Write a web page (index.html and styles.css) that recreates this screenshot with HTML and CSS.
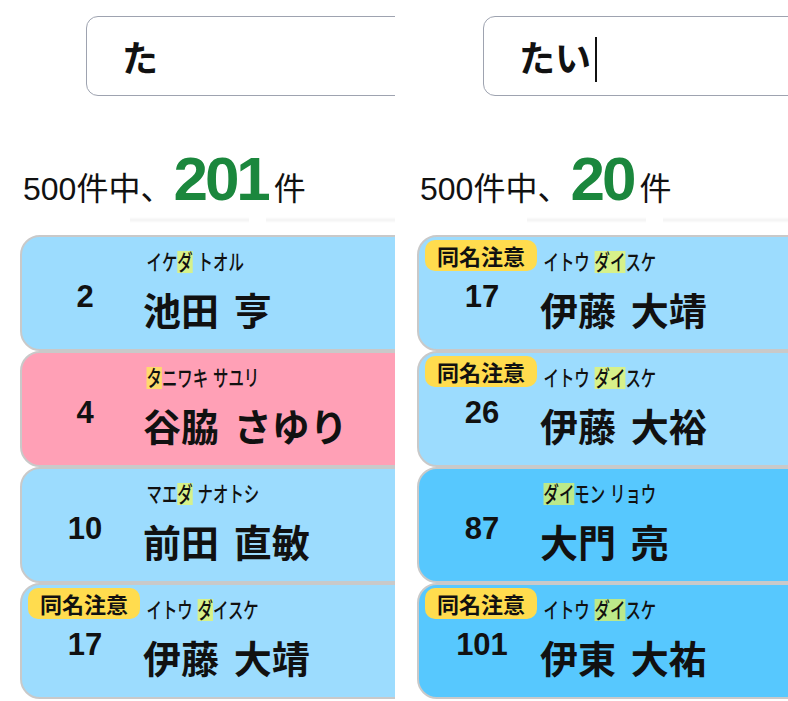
FILE: index.html
```html
<!DOCTYPE html>
<html lang="ja">
<head>
<meta charset="utf-8">
<title>検索</title>
<link rel="stylesheet" href="styles.css">
</head>
<body>
<div class="screens">
  <section class="panel">
    <div class="search"><span class="query">た</span></div>
    <div class="count"><span class="total">500件中、</span><span class="hits">201</span><span class="unit">件</span></div>
    <div class="fade"><span class="fade-a"></span><span class="fade-b"></span></div>
    <ul class="list">
      <li class="card blue">
        <div class="num">2</div>
        <div class="person"><div class="kana">イケ<mark>ダ</mark> トオル</div><div class="name">池田 亨</div></div>
      </li>
      <li class="card pink">
        <div class="num">4</div>
        <div class="person"><div class="kana"><mark>タ</mark>ニワキ サユリ</div><div class="name">谷脇 さゆり</div></div>
      </li>
      <li class="card blue">
        <div class="num">10</div>
        <div class="person"><div class="kana">マエ<mark>ダ</mark> ナオトシ</div><div class="name">前田 直敏</div></div>
      </li>
      <li class="card blue">
        <span class="badge">同名注意</span>
        <div class="num">17</div>
        <div class="person"><div class="kana">イトウ <mark>ダ</mark>イスケ</div><div class="name">伊藤 大靖</div></div>
      </li>
    </ul>
  </section>
  <section class="panel">
    <div class="search"><span class="query">たい</span><span class="caret"></span></div>
    <div class="count"><span class="total">500件中、</span><span class="hits">20</span><span class="unit">件</span></div>
    <div class="fade"><span class="fade-a"></span><span class="fade-b"></span></div>
    <ul class="list">
      <li class="card blue">
        <span class="badge">同名注意</span>
        <div class="num">17</div>
        <div class="person"><div class="kana">イトウ <mark>ダイ</mark>スケ</div><div class="name">伊藤 大靖</div></div>
      </li>
      <li class="card blue">
        <span class="badge">同名注意</span>
        <div class="num">26</div>
        <div class="person"><div class="kana">イトウ <mark>ダイ</mark>スケ</div><div class="name">伊藤 大裕</div></div>
      </li>
      <li class="card deep">
        <div class="num">87</div>
        <div class="person"><div class="kana"><mark>ダイ</mark>モン リョウ</div><div class="name">大門 亮</div></div>
      </li>
      <li class="card deep">
        <span class="badge">同名注意</span>
        <div class="num">101</div>
        <div class="person"><div class="kana">イトウ <mark>ダイ</mark>スケ</div><div class="name">伊東 大祐</div></div>
      </li>
    </ul>
  </section>
</div>
</body>
</html>
```
FILE: styles.css
```css
* { box-sizing: border-box; }
html, body { margin: 0; padding: 0; background: #fff; }
body {
  font-family: "Liberation Sans", "Noto Sans CJK JP", sans-serif;
  color: #111;
}
.screens { display: flex; gap: 2px; }
.panel {
  width: 395px;
  height: 701px;
  overflow: hidden;
  flex: none;
}
.search {
  margin: 16px 0 0 86px;
  width: 420px;
  height: 80px;
  border: 1.5px solid #9ea3b0;
  border-radius: 12px;
  padding-left: 35px;
  display: flex;
  align-items: center;
}
.query {
  font-family: "Noto Sans CJK JP", sans-serif;
  font-weight: 700;
  font-size: 36px;
  line-height: 1;
  color: #111;
}
.caret {
  width: 1.5px;
  height: 45px;
  background: #111;
  margin: 7px 0 0 4px;
}
.count {
  margin: 52px 0 0 23px;
  height: 62px;
  display: flex;
  align-items: baseline;
  line-height: 1;
}
.total, .unit { font-size: 32px; }
.hits {
  font-size: 62px;
  font-weight: 700;
  letter-spacing: -3px;
  color: #1b873d;
  margin-left: 1px;
}
.unit { font-family: "Noto Sans CJK JP", sans-serif; margin-left: 6px; }
.fade {
  display: flex;
  gap: 17px;
  margin: 7px 0 0 130px;
  height: 6px;
}
.fade span {
  display: block;
  height: 6px;
  background: linear-gradient(to bottom, #fff, #f3f3f3 50%, #fff);
}
.fade-a { width: 183px; }
.fade-b { width: 200px; }
.list {
  list-style: none;
  margin: 12px 0 0 20px;
  padding: 0;
  width: 420px;
}
.card {
  position: relative;
  height: 116px;
  border: 2px solid #c9c9c9;
  border-radius: 20px 0 0 20px;
  display: grid;
  grid-template-columns: 121px 1fr;
}
.blue { background: #9cdcfe; }
.pink { background: #ffa0b6; }
.deep { background: #57c8fe; }
.num {
  padding: 44px 0 0 5px;
  text-align: center;
  font-size: 31px;
  font-weight: 700;
  line-height: 1;
}
.person { padding-top: 14px; }
.kana {
  font-family: "Noto Sans CJK JP", sans-serif;
  font-size: 22px;
  font-weight: 500;
  line-height: 18px;
  height: 18px;
  padding-left: 5px;
  word-spacing: 2px;
  white-space: nowrap;
  transform: scaleX(0.7);
  transform-origin: left center;
}
mark {
  display: inline-block;
  line-height: 18px;
  padding-bottom: 4px;
  color: inherit;
  background: rgba(255, 255, 60, 0.6);
}
.name {
  margin-top: 21px;
  font-family: "Noto Sans CJK JP", sans-serif;
  font-size: 38px;
  font-weight: 700;
  line-height: 1;
  word-spacing: 6px;
  white-space: nowrap;
}
.badge {
  position: absolute;
  top: 3px;
  left: 6px;
  width: 112px;
  height: 31px;
  border-radius: 10px;
  background: #ffdc4e;
  font-family: "Noto Sans CJK JP", sans-serif;
  font-size: 22px;
  font-weight: 700;
  line-height: 31px;
  text-align: center;
  color: #111;
}
```
